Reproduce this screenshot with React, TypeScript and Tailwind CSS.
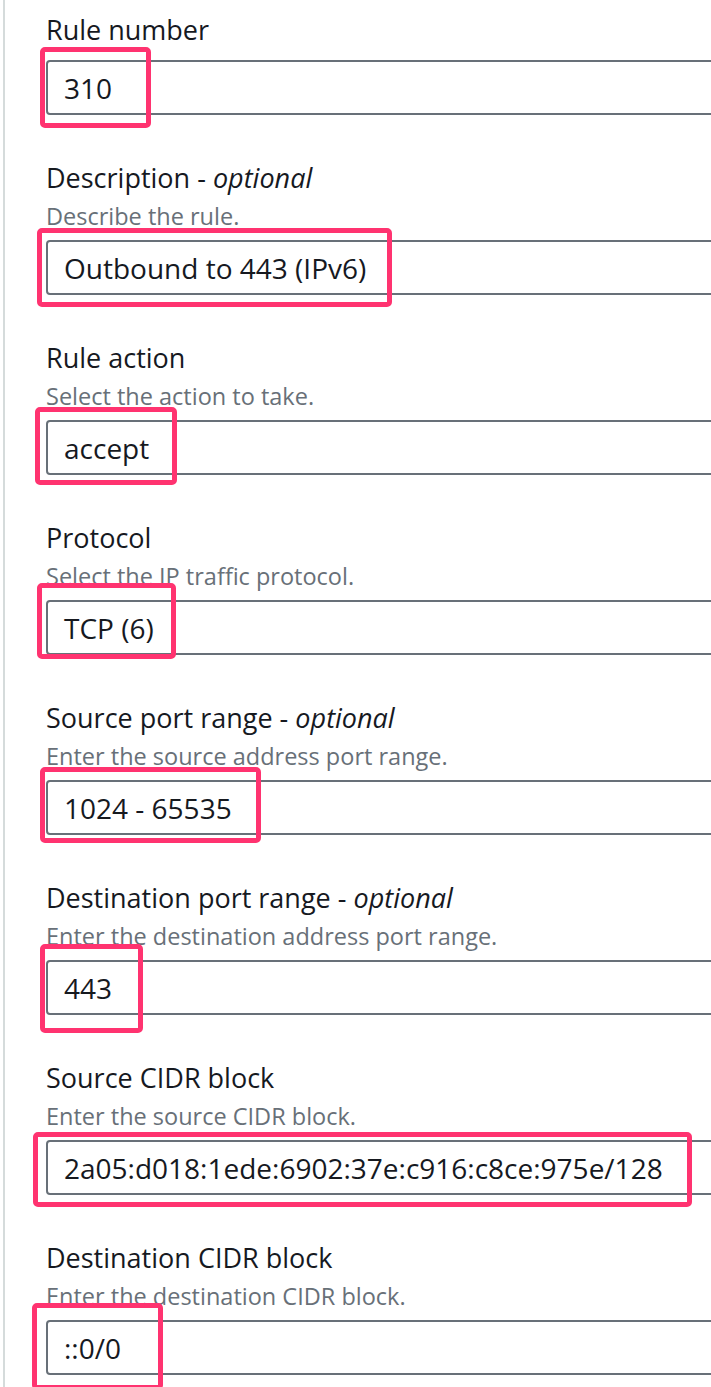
import React from 'react';

type Box = { left: number; top: number; width: number; height: number };

type FieldProps = {
  label: string;
  optional?: boolean;
  helper?: string;
  value: string;
  box: Box;
};

const Field: React.FC<FieldProps> = ({ label, optional, helper, value, box }) => (
  <div className="flex flex-col">
    <label className="text-[27px] leading-[36px] text-[#16191f]">
      {label}
      {optional && (
        <>
          {' - '}
          <i>optional</i>
        </>
      )}
    </label>
    {helper && <p className="mt-[4px] text-[23.5px] leading-[32px] text-[#687078]">{helper}</p>}
    <div className={`relative ${helper ? 'mt-[8px]' : 'mt-[12px]'}`}>
      <div className="h-[55px] w-[720px] flex items-center rounded-[4px] border-2 border-[#687078] bg-white pl-[16px] text-[28px] text-[#16191f]">
        {value}
      </div>
      {/* annotation highlight */}
      <div
        className="absolute rounded-[5px] border-[5px] border-[#ff3370] pointer-events-none"
        style={{ left: box.left, top: box.top, width: box.width, height: box.height }}
      />
    </div>
  </div>
);

const fields: FieldProps[] = [
  { label: 'Rule number', value: '310', box: { left: -6, top: -13, width: 111, height: 81 } },
  { label: 'Description', optional: true, helper: 'Describe the rule.', value: 'Outbound to 443 (IPv6)', box: { left: -9, top: -12, width: 355, height: 79 } },
  { label: 'Rule action', helper: 'Select the action to take.', value: 'accept', box: { left: -11, top: -13, width: 142, height: 78 } },
  { label: 'Protocol', helper: 'Select the IP traffic protocol.', value: 'TCP (6)', box: { left: -9, top: -17, width: 139, height: 76 } },
  { label: 'Source port range', optional: true, helper: 'Enter the source address port range.', value: '1024 - 65535', box: { left: -6, top: -13, width: 221, height: 76 } },
  { label: 'Destination port range', optional: true, helper: 'Enter the destination address port range.', value: '443', box: { left: -6, top: -16, width: 103, height: 89 } },
  { label: 'Source CIDR block', helper: 'Enter the source CIDR block.', value: '2a05:d018:1ede:6902:37e:c916:c8ce:975e/128', box: { left: -13, top: -8, width: 659, height: 75 } },
  { label: 'Destination CIDR block', helper: 'Enter the destination CIDR block.', value: '::0/0', box: { left: -14, top: -17, width: 131, height: 87 } },
];

export default function App() {
  return (
    <div className="h-[1387px] overflow-hidden bg-white font-['Open_Sans',Arial,sans-serif]">
      <div className="ml-[3px] h-full border-l-2 border-[#d5dbdb] pl-[41px] pt-[12px] flex flex-col gap-[45px]">
        {fields.map((f) => (
          <Field key={f.label} {...f} />
        ))}
      </div>
    </div>
  );
}
